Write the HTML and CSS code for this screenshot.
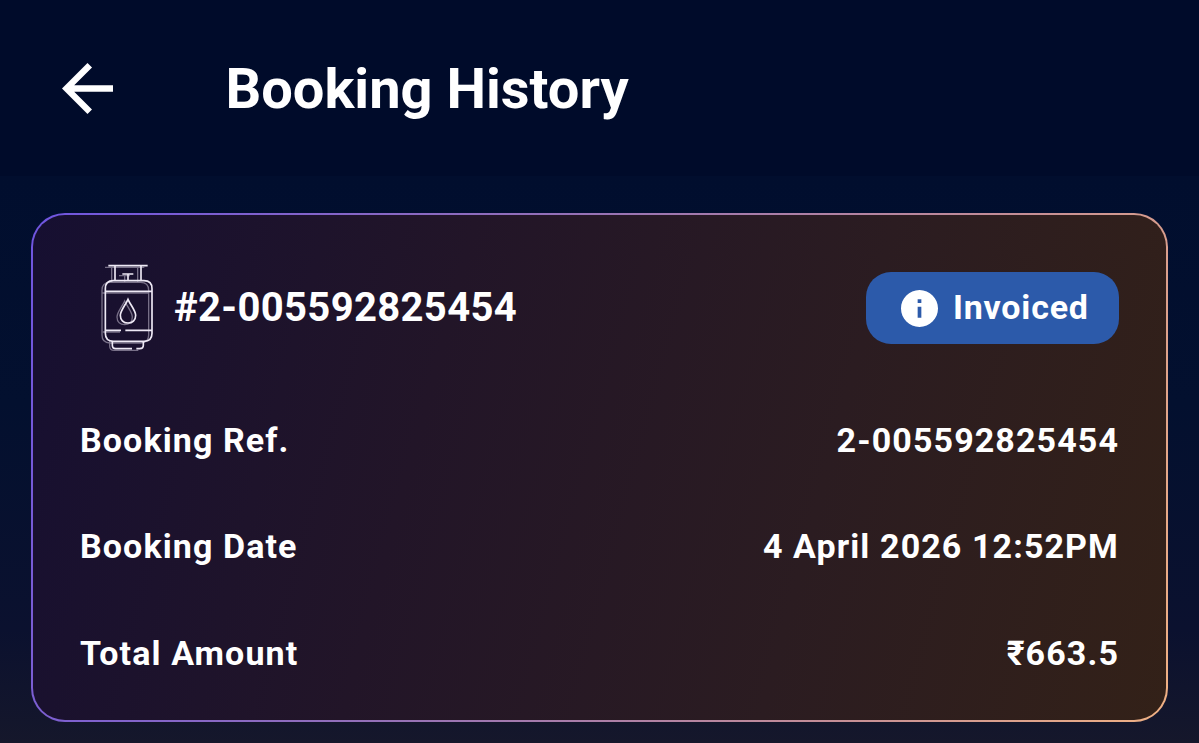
FILE: index.html
```html
<!DOCTYPE html>
<html lang="en">
<head>
    <meta charset="UTF-8">
    <meta name="viewport" content="width=device-width, initial-scale=1.0">
    <title>Booking History</title>
    <link rel="stylesheet" href="styles.css">
</head>
<body>
    <header class="header">
        <svg class="back" viewBox="4 4 16 16" fill="#fff">
            <path d="M20 11H7.83l5.59-5.59L12 4l-8 8 8 8 1.41-1.41L7.83 13H20v-2z"/>
        </svg>
        <h1>Booking History</h1>
    </header>
    <main class="content">
        <div class="card">
            <div class="card-top">
                <svg class="cylinder" viewBox="30 24 159 264" fill="none" stroke-width="5">
                    <defs>
                        <g id="tank">
                            <path d="M55 32H173M75 32V75M153 32V75M97 57H130M114 57V75"/>
                            <path d="M46 226V101Q46 77 70 77H162Q186 77 186 101V235Q186 259 162 259H70Q46 259 46 235V226"/>
                            <path d="M46 109H186"/>
                            <path d="M114 133C106 151 91 167 91 181C91 196 101 204 114 204C127 204 137 196 137 181C137 167 122 151 114 133Z"/>
                        </g>
                    </defs>
                    <use href="#tank" x="-10" y="5" class="tank-shadow"/>
                    <path class="tank-shadow" d="M38 231H90M59 259V273Q59 286 72 286H145"/>
                    <use href="#tank" class="tank-line"/>
                    <path class="tank-line" d="M46 226H93M106 226H186M67 259V271Q67 281 77 281H126M139 281H149Q160 281 160 271V259"/>
                </svg>
                <h2>#2-005592825454</h2>
                <div class="status">
                    <svg class="info" viewBox="2 2 20 20" fill="#fff">
                        <path d="M12 2C6.48 2 2 6.48 2 12s4.48 10 10 10 10-4.48 10-10S17.52 2 12 2zm1 15h-2v-6h2v6zm0-8h-2V7h2v2z"/>
                    </svg>
                    <span>Invoiced</span>
                </div>
            </div>
            <div class="row">
                <span>Booking Ref.</span>
                <span>2-005592825454</span>
            </div>
            <div class="row">
                <span>Booking Date</span>
                <span>4 April 2026 12:52PM</span>
            </div>
            <div class="row">
                <span>Total Amount</span>
                <span>₹663.5</span>
            </div>
        </div>
    </main>
</body>
</html>
```
FILE: styles.css
```css
* {
    box-sizing: border-box;
}

body {
    margin: 0;
    height: 100vh;
    display: flex;
    flex-direction: column;
    overflow: hidden;
    font-family: Roboto, 'Open Sans', sans-serif;
    font-weight: 700;
    color: #fff;
    background-color: #000b2a;
}

.header {
    height: 176px;
    flex-shrink: 0;
    display: flex;
    align-items: center;
    padding-left: 62px;
}

.back {
    width: 51px;
    height: 51px;
    margin-right: 112.5px;
}

h1 {
    margin: 0;
    padding-top: 2px;
    font-size: 56px;
    line-height: 66px;
}

.content {
    flex: 1;
    padding: 37px 31px 21px;
    background: linear-gradient(to bottom, #010e2e, #03102f 40%, #0b112f 80%, #15172b);
}

.card {
    height: 509px;
    padding: 41px 47px 0 47px;
    border: 2px solid transparent;
    border-radius: 34px;
    background:
        linear-gradient(105deg, #160f31, #221528 35%, #2b1c21 68%, #332118) padding-box,
        linear-gradient(110deg, #6f55e0, #9470b8 40%, #c58e96 75%, #f0b184) border-box;
}

.card-top {
    height: 104px;
    display: flex;
    align-items: center;
    margin-bottom: 27px;
}

.cylinder {
    width: 53px;
    height: 88px;
    margin: 0 21px 3px 20px;
}

.tank-line {
    stroke: #eee9f5;
}

.tank-shadow {
    stroke: #776f87;
    stroke-width: 4;
}

h2 {
    margin: 0 0 2px;
    font-size: 40px;
    letter-spacing: 0.35px;
}

.status {
    width: 253px;
    height: 72px;
    margin-left: auto;
    padding-left: 35px;
    display: flex;
    align-items: center;
    gap: 15px;
    border-radius: 25px;
    background-color: #2c5aaa;
    font-size: 34px;
    letter-spacing: 0.8px;
}

.status span {
    margin-bottom: 2px;
}

.info {
    width: 37px;
    height: 37px;
}

.row {
    height: 106.3px;
    display: flex;
    align-items: center;
    justify-content: space-between;
    font-size: 34px;
    letter-spacing: 1.1px;
}
```
